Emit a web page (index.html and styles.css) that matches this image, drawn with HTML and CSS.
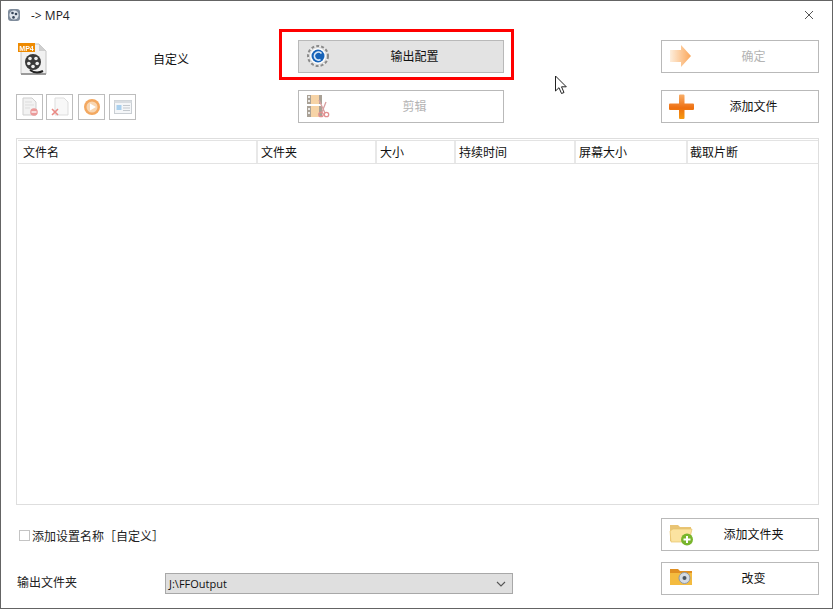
FILE: index.html
```html
<!DOCTYPE html>
<html lang="zh-CN">
<head>
    <meta charset="UTF-8">
    <title>-> MP4</title>
    <link rel="stylesheet" href="styles.css">
</head>
<body>
    <div class="window">
        <div class="titlebar">
            <svg class="app-icon" width="14" height="14" viewBox="0 0 14 14">
                <rect x="1" y="1" width="12" height="12" rx="3" fill="#7f8c9c"/>
                <circle cx="7" cy="7" r="4.6" fill="#dfe5ec"/>
                <circle cx="5.5" cy="5" r="1.3" fill="#38465a"/>
                <circle cx="9" cy="6" r="1.3" fill="#38465a"/>
                <circle cx="6.5" cy="9.4" r="1.3" fill="#38465a"/>
            </svg>
            <span class="title">-&gt; MP4</span>
            <svg class="close" width="10" height="10" viewBox="0 0 10 10">
                <path d="M1 1l8 8M9 1l-8 8" stroke="#555" stroke-width="1" fill="none"/>
            </svg>
        </div>

        <div class="top">
            <div class="profile">
                <svg class="file-icon" width="32" height="34" viewBox="0 0 32 34">
                    <path d="M5 2h18l7 7v23H5z" fill="#f1f1f1" stroke="#c4c4c4"/>
                    <path d="M23 2v7h7z" fill="#cfcfcf"/>
                    <path d="M5 31h25v2H5z" fill="#9a9a9a"/>
                    <circle cx="17" cy="20" r="8" fill="#3a3a3a"/>
                    <circle cx="14" cy="16.500" r="1.800" fill="#eee"/>
                    <circle cx="20" cy="16.500" r="1.800" fill="#eee"/>
                    <circle cx="12.800" cy="21.500" r="1.800" fill="#eee"/>
                    <circle cx="21.200" cy="21.500" r="1.800" fill="#eee"/>
                    <circle cx="17" cy="24.500" r="1.800" fill="#eee"/>
                    <path d="M14 28c4 3 9 3 13 1" stroke="#222" stroke-width="2" fill="none"/>
                    <rect x="2" y="1" width="17" height="9" fill="#ee8a00"/>
                    <text x="10.500" y="8.500" class="file-tag">MP4</text>
                </svg>
                <span class="profile-name">自定义</span>
            </div>
            <div class="btn-cell">
                <button class="btn btn-active">
                    <svg class="btn-icon" width="24" height="24" viewBox="0 0 24 24">
                        <circle cx="12" cy="12" r="10" fill="#f4f4f4" stroke="#8a8a8a" stroke-width="2" stroke-dasharray="3 2"/>
                        <circle cx="12" cy="12" r="8.500" fill="#fff" stroke="#b5b5b5" stroke-width=".6"/>
                        <circle cx="12" cy="12" r="6.500" fill="#1763b8"/>
                        <path d="M15.500 9.500a4 4 0 1 0-1 6" stroke="#dbe9f7" stroke-width="1.700" fill="none"/>
                    </svg>
                    <span>输出配置</span>
                </button>
                <div class="highlight"></div>
            </div>
            <button class="btn btn-ok" disabled>
                <svg class="btn-icon" width="24" height="24" viewBox="0 0 24 24">
                    <defs>
                        <linearGradient id="arrow" x1="0" x2="1" y1="0" y2="0">
                            <stop offset="0" stop-color="#fdeedd"/>
                            <stop offset="1" stop-color="#fba75a"/>
                        </linearGradient>
                    </defs>
                    <path d="M1 6h11V1l10 11-10 11v-5H1z" fill="url(#arrow)"/>
                </svg>
                <span>确定</span>
            </button>

            <div class="tools">
                <button class="tool" disabled>
                    <svg width="18" height="20" viewBox="0 0 18 20">
                        <path d="M2 1h9l4 4v13H2z" fill="#f2f2f2" stroke="#cfcfcf"/>
                        <path d="M4 5h7M4 8h9M4 11h5" stroke="#ddd"/>
                        <circle cx="13" cy="15" r="3.800" fill="#eb9a9a"/>
                        <path d="M10.500 15h5" stroke="#fff" stroke-width="1.300"/>
                    </svg>
                </button>
                <button class="tool" disabled>
                    <svg width="18" height="20" viewBox="0 0 18 20">
                        <path d="M4 1h9l4 4v13H4z" fill="#f8f8f8" stroke="#ddd"/>
                        <path d="M1 12l6 6M7 12l-6 6" stroke="#ea8a85" stroke-width="1.600"/>
                    </svg>
                </button>
                <button class="tool tool-gap" disabled>
                    <svg width="18" height="18" viewBox="0 0 18 18">
                        <circle cx="9" cy="9" r="8" fill="#f3a860"/>
                        <circle cx="9" cy="9" r="5.500" fill="#f8d6b2"/>
                        <path d="M7 5.500v7l6-3.500z" fill="#fff"/>
                    </svg>
                </button>
                <button class="tool" disabled>
                    <svg width="18" height="14" viewBox="0 0 18 14">
                        <rect x=".5" y=".5" width="17" height="13" fill="#f4f6f8" stroke="#c9ced3"/>
                        <rect x=".5" y=".5" width="17" height="2.500" fill="#d9dde1"/>
                        <rect x="2.500" y="5" width="5" height="5" fill="#a9d0ee"/>
                        <path d="M9 5.500h7M9 8h7M9 10.500h7" stroke="#c4c9ce"/>
                    </svg>
                </button>
            </div>
            <button class="btn btn-off" disabled>
                <svg class="btn-icon" width="24" height="24" viewBox="0 0 24 24">
                    <path d="M1 1h15v22H1z" fill="#f6d3a6"/>
                    <path d="M1 1h4v22H1zM13 1h3v22h-3z" fill="#a9a196"/>
                    <path d="M1 11h15" stroke="#fff" stroke-width="2"/>
                    <path d="M2 3h2M2 7h2M2 15h2M2 19h2" stroke="#fff" stroke-width="1.500"/>
                    <path d="M13 6l6 13M20 8l-4 10" stroke="#d8a0a0" stroke-width="1.300"/>
                    <circle cx="20.500" cy="20.500" r="2.200" fill="none" stroke="#e28f8f" stroke-width="1.300"/>
                    <circle cx="15" cy="20.500" r="2.200" fill="none" stroke="#e28f8f" stroke-width="1.300"/>
                </svg>
                <span>剪辑</span>
            </button>
            <button class="btn btn-add">
                <svg class="btn-icon" width="26" height="26" viewBox="0 0 26 26">
                    <defs>
                        <linearGradient id="plus" x1="0" x2="0" y1="0" y2="1">
                            <stop offset="0" stop-color="#f9ae68"/>
                            <stop offset=".55" stop-color="#ee6f10"/>
                            <stop offset="1" stop-color="#f59a10"/>
                        </linearGradient>
                    </defs>
                    <path d="M10 1.500q0-1 1-1h3.500q1 0 1 1v8h8.500q1 0 1 1v4.500q0 1-1 1h-8.500v8q0 1-1 1h-3.500q-1 0-1-1v-8H1q-1 0-1-1v-4.500q0-1 1-1h9z" fill="url(#plus)"/>
                </svg>
                <span>添加文件</span>
            </button>
        </div>

        <div class="file-list">
            <div class="list-head">
                <div class="col col-name">文件名</div>
                <div class="col col-folder">文件夹</div>
                <div class="col col-size">大小</div>
                <div class="col col-time">持续时间</div>
                <div class="col col-screen">屏幕大小</div>
                <div class="col col-clip">截取片断</div>
            </div>
        </div>

        <div class="bottom">
            <label class="check"><span class="box"></span>添加设置名称［自定义］</label>
            <button class="btn btn-add">
                <svg class="btn-icon" width="26" height="24" viewBox="0 0 26 24">
                    <path d="M1 3h8l2 2h11v14H1z" fill="#e9c474"/>
                    <path d="M1 9l3-2h19l-3 13H2z" fill="#fbe3a0" stroke="#e6c36c" stroke-width=".7"/>
                    <circle cx="18" cy="17.500" r="6" fill="#78b52c"/>
                    <path d="M18 14v7M14.500 17.500h7" stroke="#fff" stroke-width="2"/>
                </svg>
                <span>添加文件夹</span>
            </button>
            <span class="out-label">输出文件夹</span>
            <div class="folder-select">
                <span>J:\FFOutput</span>
                <svg width="10" height="6" viewBox="0 0 10 6">
                    <path d="M1 1l4 4 4-4" stroke="#555" stroke-width="1.100" fill="none"/>
                </svg>
            </div>
            <button class="btn btn-add">
                <svg class="btn-icon" width="24" height="20" viewBox="0 0 24 20">
                    <path d="M1 3h8l2 2h12v14H1z" fill="#e08f22"/>
                    <path d="M1 7h22v12H1z" fill="#f4bb3f"/>
                    <circle cx="15.500" cy="12" r="5.500" fill="#d5dbe3" stroke="#8f98a4"/>
                    <circle cx="15.500" cy="12" r="2" fill="#4b5561"/>
                </svg>
                <span>改变</span>
            </button>
        </div>

        <svg class="pointer" width="14" height="20" viewBox="0 0 14 20">
            <path d="M1.500 1v15l3.500-3.300 2.500 5.800 2.500-1-2.500-5.700h4.800z" fill="#fff" stroke="#222" stroke-width="1"/>
        </svg>
    </div>
</body>
</html>
```

FILE: styles.css
```css
html, body {
    margin: 0;
    padding: 0;
    height: 100%;
    overflow: hidden;
}

body {
    background-color: #fff;
    color: #111;
    font-family: "Open Sans", "Noto Sans CJK SC", sans-serif;
    font-size: 12px;
}

.window {
    position: relative;
    box-sizing: border-box;
    width: 833px;
    height: 609px;
    border: 1px solid #646464;
    padding-bottom: 12px;
    display: flex;
    flex-direction: column;
}

.titlebar {
    height: 28px;
    display: flex;
    align-items: center;
    padding: 0 18px 0 6px;
    flex: none;
}

.title {
    margin-left: 10px;
    color: #222;
    font-size: 12px;
}

.close {
    margin-left: auto;
}

.top {
    display: grid;
    grid-template-columns: 282px 206px 157px 158px;
    grid-template-rows: 33px 33px;
    row-gap: 17px;
    margin: 11px 0 0 15px;
    flex: none;
}

.btn {
    position: relative;
    box-sizing: border-box;
    width: 100%;
    height: 33px;
    background-color: #fff;
    border: 1px solid #b9b9b9;
    padding: 0 0 2px 27px;
    font: inherit;
    color: #111;
    display: flex;
    align-items: center;
    justify-content: center;
}

/* the icons are soft in the original, small scaled bitmaps */
.btn-icon,
.tool svg,
.file-icon,
.app-icon {
    filter: blur(0.4px);
}

.btn-icon {
    position: absolute;
    left: 7px;
    top: 3px;
}

.btn-active {
    background-color: #e3e3e3;
}

.btn:disabled {
    color: #b4b4b4;
}

.btn-ok,
.btn-add {
    grid-column: 4;
}

.btn-off {
    grid-column: 2;
}

.btn-cell {
    position: relative;
    grid-column: 2;
}

.highlight {
    position: absolute;
    left: -19px;
    top: -11px;
    width: 235px;
    height: 51px;
    box-sizing: border-box;
    border: 3px solid #f00;
}

.profile {
    display: flex;
    align-items: center;
    padding-top: 4px;
}

.file-tag {
    fill: #fff;
    font-family: "Liberation Sans", sans-serif;
    font-size: 7px;
    font-weight: bold;
    text-anchor: middle;
}

.profile-name {
    margin-left: 105px;
}

.tools {
    display: flex;
    align-items: center;
    grid-column: 1;
    gap: 3px;
}

.tool {
    box-sizing: border-box;
    width: 27px;
    height: 26px;
    padding: 0;
    background-color: #fff;
    border: 1px solid #bdbdbd;
    display: flex;
    align-items: center;
    justify-content: center;
}

.tool-gap {
    margin: 0 1px 0 2px;
}

.file-list {
    box-sizing: border-box;
    flex: none;
    width: 803px;
    height: 367px;
    margin: 15px 0 0 15px;
    border: 1px solid #dedede;
    padding: 1px 0 0 1px;
}

.list-head {
    display: flex;
    height: 24px;
    border-top: 1px solid #e3e3e3;
    border-bottom: 1px solid #e3e3e3;
    box-sizing: border-box;
}

.col {
    box-sizing: border-box;
    padding-left: 3px;
    line-height: 24px;
    border-right: 2px solid #e8e8e8;
}

.col-name { width: 240px; padding-left: 5px; }
.col-folder { width: 119px; }
.col-size { width: 79px; }
.col-time { width: 120px; }
.col-screen { width: 112px; }
.col-clip { flex: 1; border-right: none; padding-left: 2px; }

.bottom {
    display: grid;
    grid-template-columns: 148px 348px 148px 158px;
    grid-template-rows: 33px 33px;
    row-gap: 11px;
    margin: 13px 0 0 16px;
    flex: none;
    align-items: center;
}

.check {
    grid-column: 1 / 4;
    display: flex;
    align-items: center;
    color: #222;
    padding-top: 2px;
}

.box {
    box-sizing: border-box;
    width: 11px;
    height: 11px;
    margin: 0 2px 0 2px;
    border: 1px solid #c4c4c4;
}

.out-label {
    color: #222;
    padding-top: 6px;
}

.folder-select {
    box-sizing: border-box;
    height: 21px;
    background-color: #dfdfdf;
    border: 1px solid #a8a8a8;
    padding: 0 6px 0 3px;
    display: flex;
    align-items: center;
    justify-content: space-between;
    font-size: 11px;
    align-self: end;
    margin-bottom: 1px;
}

.pointer {
    position: absolute;
    left: 553px;
    top: 74px;
}
```
